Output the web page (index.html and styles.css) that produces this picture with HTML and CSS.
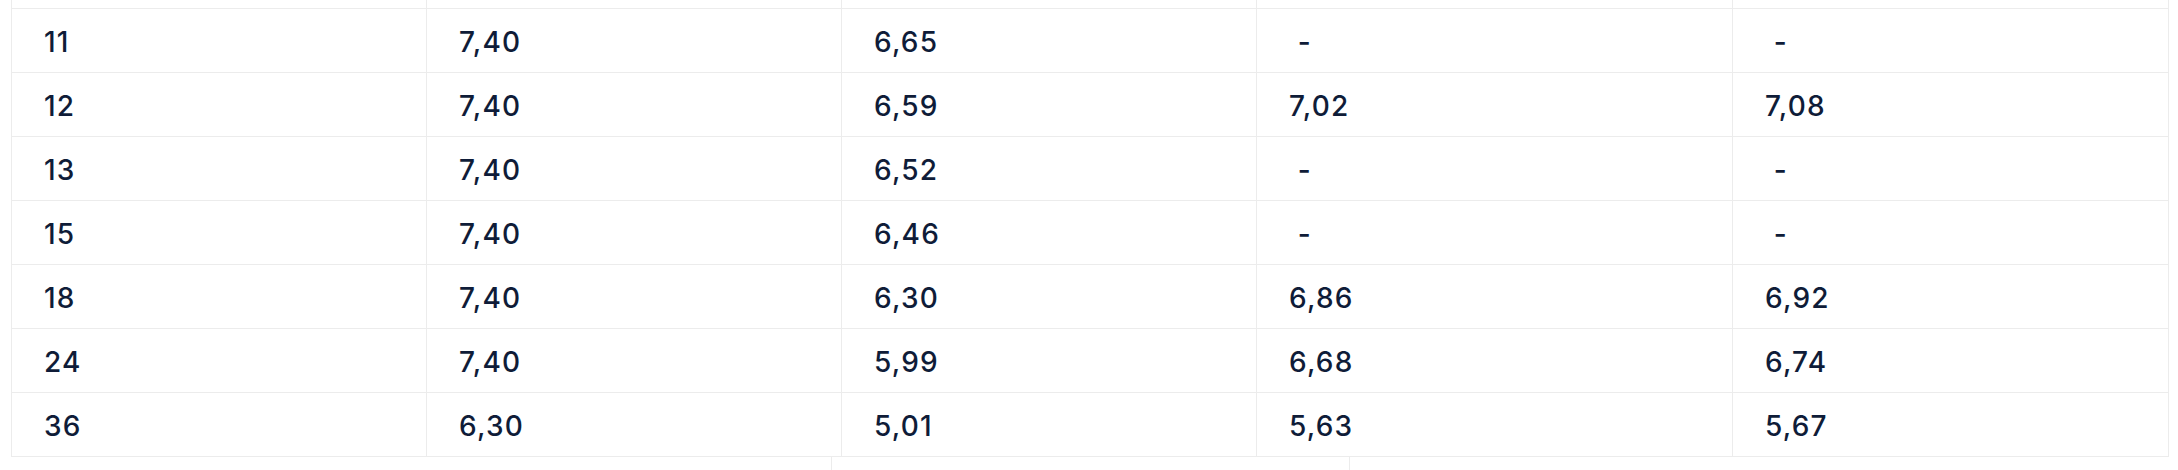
FILE: index.html
```html
<!DOCTYPE html>
<html lang="de">
<head>
<meta charset="utf-8">
<title>Zinstabelle</title>
<link rel="stylesheet" href="styles.css">
</head>
<body>
<div class="table">
  <div class="cell spacer"></div><div class="cell spacer"></div><div class="cell spacer"></div><div class="cell spacer"></div><div class="cell spacer"></div>

  <div class="cell">11</div><div class="cell">7,40</div><div class="cell">6,65</div><div class="cell">&nbsp;-</div><div class="cell">&nbsp;-</div>
  <div class="cell">12</div><div class="cell">7,40</div><div class="cell">6,59</div><div class="cell">7,02</div><div class="cell">7,08</div>
  <div class="cell">13</div><div class="cell">7,40</div><div class="cell">6,52</div><div class="cell">&nbsp;-</div><div class="cell">&nbsp;-</div>
  <div class="cell">15</div><div class="cell">7,40</div><div class="cell">6,46</div><div class="cell">&nbsp;-</div><div class="cell">&nbsp;-</div>
  <div class="cell">18</div><div class="cell">7,40</div><div class="cell">6,30</div><div class="cell">6,86</div><div class="cell">6,92</div>
  <div class="cell">24</div><div class="cell">7,40</div><div class="cell">5,99</div><div class="cell">6,68</div><div class="cell">6,74</div>
  <div class="cell">36</div><div class="cell">6,30</div><div class="cell">5,01</div><div class="cell">5,63</div><div class="cell">5,67</div>
</div>
<div class="below"></div>
</body>
</html>
```
FILE: styles.css
```css
html, body {
  margin: 0;
  padding: 0;
  background: #ffffff;
}

body {
  font-family: Inter, "Liberation Sans", Arial, sans-serif;
  color: #0f1c38;
  overflow: hidden;
}

.table {
  display: grid;
  grid-template-columns: 415px 415px 415px 476px 436px;
  margin-left: 11px;
  width: max-content;
  border-left: 1px solid #ececec;
}

.cell {
  box-sizing: border-box;
  height: 64px;
  border-right: 1px solid #ececec;
  border-bottom: 1px solid #ececec;
  padding: 3px 0 0 32px;
  display: flex;
  align-items: center;
  font-size: 28px;
  font-weight: 500;
  letter-spacing: 1.2px;
  white-space: pre;
}

.cell.spacer {
  height: 9px;
  padding: 0;
}

.below {
  margin-left: 831px;
  width: 517px;
  height: 13px;
  border-left: 1px solid #ececec;
  border-right: 1px solid #ececec;
}
```
